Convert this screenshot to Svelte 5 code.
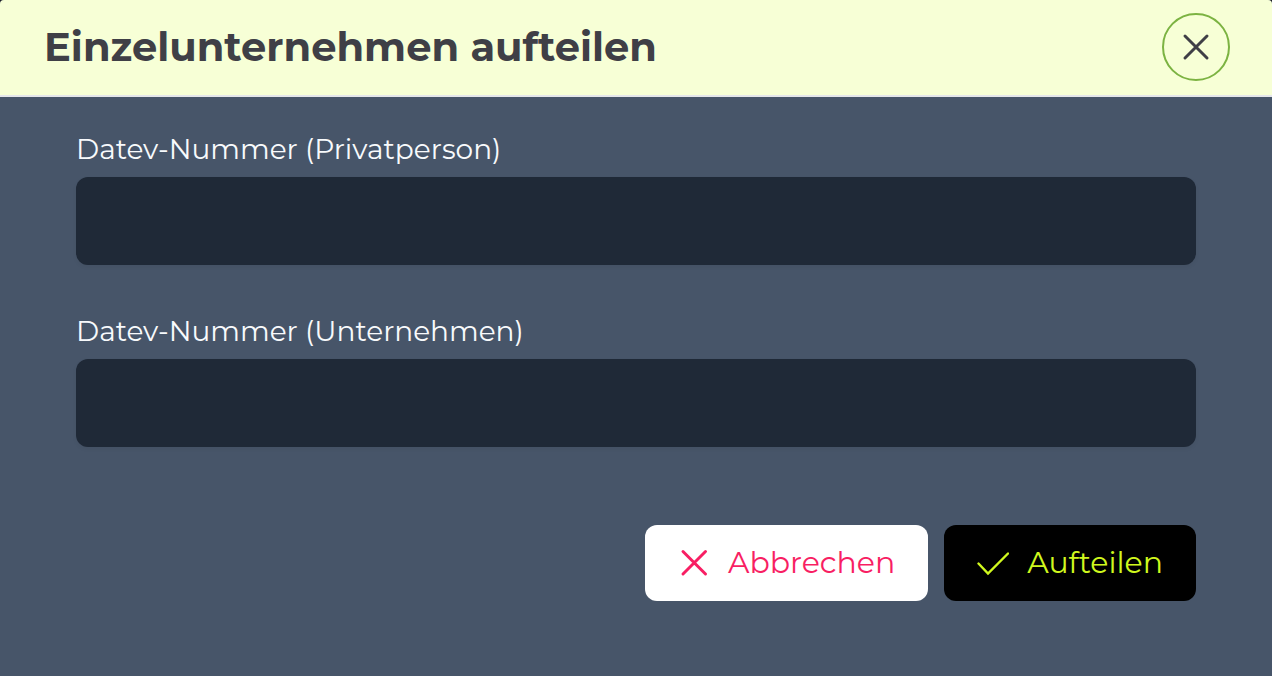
<script>
  let privateNumber = "";
  let companyNumber = "";
  let open = true;

  const close = () => (open = false);
</script>

{#if open}
  <div class="dialog" role="dialog" aria-labelledby="dialog-title">
    <header>
      <h1 id="dialog-title">Einzelunternehmen aufteilen</h1>
      <button class="close" type="button" aria-label="Schließen" on:click={close}>
        <svg class="close-icon" viewBox="0 0 28 28" aria-hidden="true">
          <path d="M3 3 25 25M25 3 3 25" />
        </svg>
      </button>
    </header>

    <form on:submit|preventDefault={close}>
      <div class="field">
        <label for="private-number">Datev-Nummer (Privatperson)</label>
        <input id="private-number" type="text" bind:value={privateNumber} />
      </div>
      <div class="field">
        <label for="company-number">Datev-Nummer (Unternehmen)</label>
        <input id="company-number" type="text" bind:value={companyNumber} />
      </div>

      <div class="actions">
        <button class="cancel" type="button" on:click={close}>
          <svg viewBox="0 0 32 32" aria-hidden="true">
            <path d="M5 5.5 27.5 28M27.5 5.5 5 28" />
          </svg>
          Abbrechen
        </button>
        <button class="submit" type="submit">
          <svg viewBox="0 0 32 32" aria-hidden="true">
            <path d="M1.5 17.5 11 27.5 31 7.5" />
          </svg>
          Aufteilen
        </button>
      </div>
    </form>
  </div>
{/if}

<style>
  :global(body) {
    margin: 0;
    background: #1a1a24;
  }
  .dialog {
    box-sizing: border-box;
    min-height: 100vh;
    overflow: hidden;
    border-radius: 4px 4px 0 0;
    background: #475569;
    color: #f8fafc;
    font-family: Montserrat, Inter, sans-serif;
  }
  header {
    display: flex;
    align-items: center;
    justify-content: space-between;
    padding: 13px 42px 14px 44px;
    border-bottom: 2px solid #e5e7eb;
    background: #f7ffd6;
  }
  h1 {
    margin: 0;
    color: #3f3f46;
    font-size: 40px;
    font-weight: 700;
    line-height: 68px;
  }
  button {
    display: flex;
    align-items: center;
    border: none;
    font: inherit;
    cursor: pointer;
  }
  svg {
    width: 32px;
    height: 32px;
    fill: none;
    stroke: currentColor;
    stroke-linecap: round;
    stroke-width: 3;
  }
  .close {
    justify-content: center;
    width: 68px;
    height: 68px;
    padding: 0;
    border: 2px solid #7cb342;
    border-radius: 50%;
    background: transparent;
    color: #3f3f46;
  }
  .close-icon {
    width: 28px;
    height: 28px;
  }
  form {
    padding: 32px 76px;
  }
  .field {
    display: flex;
    flex-direction: column;
    gap: 8px;
    margin-bottom: 46px;
  }
  label {
    font-size: 28px;
    line-height: 40px;
  }
  input {
    box-sizing: border-box;
    width: 100%;
    height: 88px;
    padding: 0 24px;
    border: none;
    border-radius: 12px;
    background: #1f2937;
    box-shadow: 0 2px 4px #0000000d;
    color: inherit;
    font: inherit;
    font-size: 28px;
  }
  .actions {
    display: flex;
    justify-content: flex-end;
    gap: 16px;
    padding-top: 32px;
  }
  .actions button {
    gap: 18px;
    height: 76px;
    padding: 0 33px 2px;
    border-radius: 12px;
    font-size: 30px;
  }
  .cancel {
    background: #fff;
    color: #f81e63;
  }
  .submit {
    background: #000;
    color: #d0f81e;
  }
  .submit svg {
    stroke-width: 2.4;
  }
</style>
